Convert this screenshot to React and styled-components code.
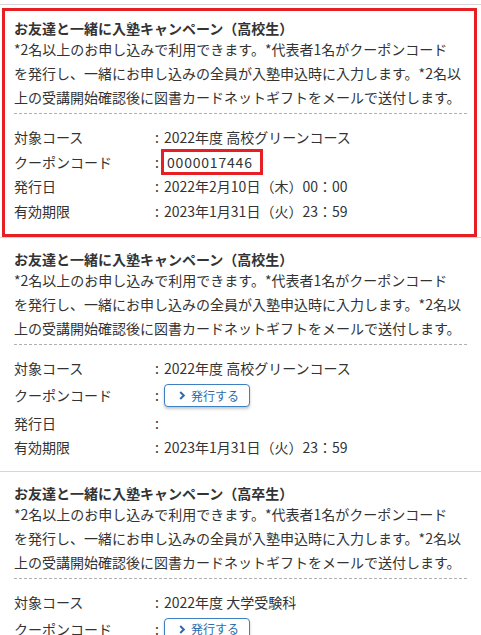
import React from 'react';
import styled, { createGlobalStyle } from 'styled-components';

// --- ESTILOS ---
const GlobalStyle = createGlobalStyle`
  html, body {
    margin: 0;
    padding: 0;
    background: #fff;
    overflow: hidden;
  }
  body {
    font-family: "Noto Sans CJK JP", "Noto Sans", sans-serif;
    color: #333;
  }
`;

const List = styled.ul`
  list-style: none;
  margin: 4px 0 0;
  padding: 0;
  border-top: 1px solid #d6d6d6;
`;

const Item = styled.li`
  padding: ${p => (p.$highlight ? '3px 4px 0 2px' : '0')};
  border-bottom: 1px solid #d6d6d6;
`;

/* el recuadro rojo marca el cupón ya emitido */
const Inner = styled.div`
  border: ${p => (p.$highlight ? '3px solid #e61f25' : 'none')};
  padding: ${p => (p.$highlight ? '8px 7px 11px 9px' : '12px 14px 11px')};
`;

const Title = styled.h3`
  margin: 0;
  font-size: 14px;
  line-height: 18px;
  font-weight: 700;
  color: #333;
`;

const Desc = styled.p`
  margin: 0;
  font-size: 14px;
  line-height: 24px;
  white-space: nowrap;
`;

const Divider = styled.hr`
  margin: 4px 0 11px;
  border: none;
  border-top: 1px dashed #b0b0b0;
`;

const Rows = styled.dl`
  margin: 0;
`;

const Row = styled.div`
  display: flex;
  align-items: center;
  min-height: ${p => (p.$tall ? '30px' : '24.5px')};
  font-size: 14px;
  line-height: 24.5px;
`;

const Label = styled.dt`
  flex: 0 0 141px;
  margin: 0;
`;

const Colon = styled.span`
  flex: 0 0 9px;
`;

const Value = styled.dd`
  margin: 0;
  display: flex;
  align-items: center;
  white-space: nowrap;
`;

const Code = styled.span`
  display: inline-block;
  margin: -1px 0 -1px -3px;
  padding: 0 7px 0 3px;
  border: 3px solid #e61f25;
  line-height: 20px;
  letter-spacing: 0.8px;
`;

const IssueButton = styled.button`
  display: inline-flex;
  align-items: center;
  gap: 6px;
  height: 23px;
  margin: 3px 0 3px;
  padding: 0 10px 0 14px;
  border: 1px solid #3d7fc1;
  border-radius: 4px;
  background: #fff;
  color: #2d6cab;
  font-family: inherit;
  font-size: 12px;
  line-height: 1;
  box-shadow: 0 2px 3px rgba(0, 0, 0, 0.22);
  cursor: pointer;
`;

const Chevron = () => (
  <svg width="6" height="9" viewBox="0 0 6 9" aria-hidden="true">
    <polyline points="1.2,1 4.8,4.5 1.2,8" fill="none" stroke="#2d6cab" strokeWidth="2" />
  </svg>
);

// --- DATOS ---
const descLines = [
  '*2名以上のお申し込みで利用できます。*代表者1名がクーポンコード',
  'を発行し、一緒にお申し込みの全員が入塾申込時に入力します。*2名以',
  '上の受講開始確認後に図書カードネットギフトをメールで送付します。',
];

const campaigns = [
  {
    title: 'お友達と一緒に入塾キャンペーン（高校生）',
    course: '2022年度 高校グリーンコース',
    code: '0000017446',
    issued: '2022年2月10日（木）00：00',
    expires: '2023年1月31日（火）23：59',
    highlight: true,
  },
  {
    title: 'お友達と一緒に入塾キャンペーン（高校生）',
    course: '2022年度 高校グリーンコース',
    code: null,
    issued: '',
    expires: '2023年1月31日（火）23：59',
  },
  {
    title: 'お友達と一緒に入塾キャンペーン（高卒生）',
    course: '2022年度 大学受験科',
    code: null,
    issued: '',
    expires: '2023年1月31日（火）23：59',
  },
];

function CampaignCard({ c }) {
  return (
    <Item $highlight={c.highlight}>
      <Inner $highlight={c.highlight}>
        <Title>{c.title}</Title>
        <Desc>
          {descLines.map((l, i) => (
            <React.Fragment key={i}>
              {l}
              {i < descLines.length - 1 && <br />}
            </React.Fragment>
          ))}
        </Desc>
        <Divider />
        <Rows>
          <Row>
            <Label>対象コース</Label>
            <Colon>:</Colon>
            <Value>{c.course}</Value>
          </Row>
          <Row $tall={!c.code}>
            <Label>クーポンコード</Label>
            <Colon>:</Colon>
            <Value>
              {c.code ? (
                <Code>{c.code}</Code>
              ) : (
                <IssueButton type="button">
                  <Chevron />
                  発行する
                </IssueButton>
              )}
            </Value>
          </Row>
          <Row>
            <Label>発行日</Label>
            <Colon>:</Colon>
            <Value>{c.issued}</Value>
          </Row>
          <Row>
            <Label>有効期限</Label>
            <Colon>:</Colon>
            <Value>{c.expires}</Value>
          </Row>
        </Rows>
      </Inner>
    </Item>
  );
}

export default function App() {
  return (
    <>
      <GlobalStyle />
      <List>
        {campaigns.map((c, i) => (
          <CampaignCard key={i} c={c} />
        ))}
      </List>
    </>
  );
}
